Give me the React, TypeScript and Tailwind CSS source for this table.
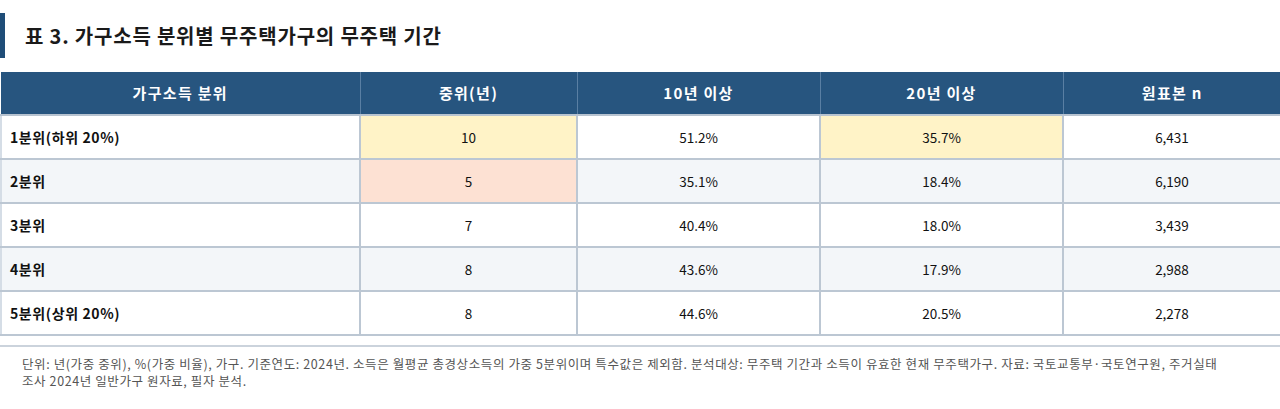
import React from 'react';

type Row = {
  label: string;
  median: string;
  over10: string;
  over20: string;
  n: string;
  medianBg?: string;
  over20Bg?: string;
};

const rows: Row[] = [
  { label: '1분위(하위 20%)', median: '10', over10: '51.2%', over20: '35.7%', n: '6,431', medianBg: 'bg-[#fff3c7]', over20Bg: 'bg-[#fff3c7]' },
  { label: '2분위', median: '5', over10: '35.1%', over20: '18.4%', n: '6,190', medianBg: 'bg-[#fde1d3]' },
  { label: '3분위', median: '7', over10: '40.4%', over20: '18.0%', n: '3,439' },
  { label: '4분위', median: '8', over10: '43.6%', over20: '17.9%', n: '2,988' },
  { label: '5분위(상위 20%)', median: '8', over10: '44.6%', over20: '20.5%', n: '2,278' },
];

const headers = ['가구소득 분위', '중위(년)', '10년 이상', '20년 이상', '원표본 n'];

const App: React.FC = () => {
  return (
    <div className="w-[1280px] h-[409px] bg-white font-['Noto_Sans_CJK_KR','Noto_Sans',sans-serif] text-[#111]">
      {/* Title */}
      <div className="pt-[13px] flex items-center h-[58px]">
        <div className="w-[5px] h-[45px] bg-[#1f4d78]" />
        <h2 className="ml-[20px] text-[20px] font-bold tracking-[0.8px] text-[#1a1a1a]">
          표 3. 가구소득 분위별 무주택가구의 무주택 기간
        </h2>
      </div>

      {/* Table */}
      <table className="mt-[14px] w-[1280px] border-collapse table-fixed">
        <colgroup>
          <col className="w-[359px]" />
          <col className="w-[217px]" />
          <col className="w-[243px]" />
          <col className="w-[243px]" />
          <col className="w-[218px]" />
        </colgroup>
        <thead>
          <tr className="h-[43px] bg-[#27557f]">
            {headers.map((h, i) => (
              <th
                key={h}
                className={`text-white text-[15px] font-bold tracking-[1.3px] text-center border-b-2 border-b-[#b7c3d0] ${
                  i > 0 ? 'border-l border-l-[#5a7fa3]' : ''
                }`}
              >
                {h}
              </th>
            ))}
          </tr>
        </thead>
        <tbody>
          {rows.map((r, idx) => {
            const stripe = idx % 2 === 1 ? 'bg-[#f3f6f9]' : 'bg-white';
            const cell = 'border-2 border-[#bcc7d3] text-center text-[13.5px]';
            return (
              <tr key={r.label} className={`h-[44px] ${stripe}`}>
                <td className="border-2 border-[#bcc7d3] border-l-[#d5dde6] pl-[8px] text-left text-[14px] font-bold tracking-[0.6px]">
                  {r.label}
                </td>
                <td className={`${cell} ${r.medianBg ?? ''}`}>{r.median}</td>
                <td className={cell}>{r.over10}</td>
                <td className={`${cell} ${r.over20Bg ?? ''}`}>{r.over20}</td>
                <td className={cell}>{r.n}</td>
              </tr>
            );
          })}
        </tbody>
      </table>

      {/* Footnote */}
      <div className="mt-[9px] border-t-2 border-[#cbd3dc] pt-[8px] pl-[22px] pr-[10px] text-[12.5px] leading-[17px] tracking-[0.6px] text-[#555] whitespace-nowrap">
        <p>
          단위: 년(가중 중위), %(가중 비율), 가구. 기준연도: 2024년. 소득은 월평균 총경상소득의 가중 5분위이며 특수값은 제외함. 분석대상: 무주택 기간과 소득이 유효한 현재 무주택가구. 자료: 국토교통부·국토연구원, 주거실태
        </p>
        <p>조사 2024년 일반가구 원자료, 필자 분석.</p>
      </div>
    </div>
  );
};

export default App;
